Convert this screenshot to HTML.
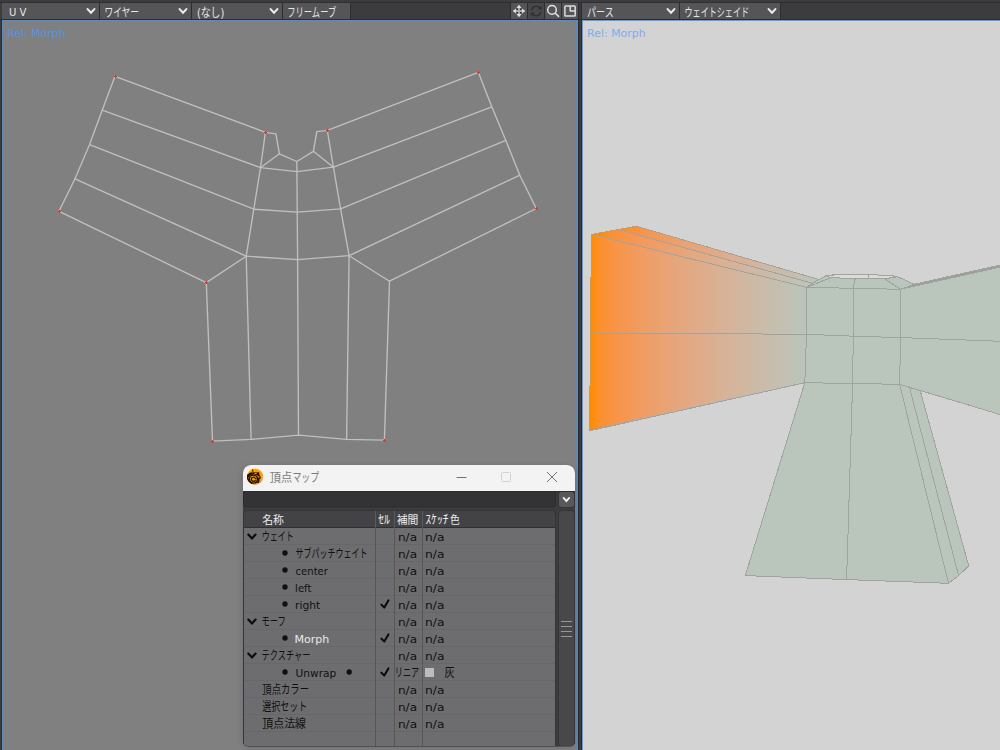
<!DOCTYPE html>
<html lang="ja">
<head>
<meta charset="utf-8">
<title>頂点マップ</title>
<style>
html,body{margin:0;padding:0;background:#3c3c3f;overflow:hidden;}
body{width:1000px;height:750px;font-family:"DejaVu Sans", "Liberation Sans", "Noto Sans CJK JP", sans-serif;}
svg{display:block;}
text{white-space:pre;}
</style>
</head>
<body>
<svg width="1000" height="750" viewBox="0 0 1000 750">
<defs><filter id="blur" x="-10%" y="-10%" width="120%" height="120%"><feGaussianBlur stdDeviation="3"/></filter></defs>
<rect x="0" y="0" width="1000" height="750" fill="#3c3c3f"/>
<rect x="0" y="2" width="1000" height="1" fill="#2f2f31"/>
<rect x="0" y="19" width="1000" height="1" fill="#2c2c2e"/>
<rect x="1" y="20" width="1" height="730" fill="#2d2d2f"/>
<rect x="578" y="3" width="1" height="747" fill="#2b2b2d"/>
<rect x="581" y="3" width="1" height="747" fill="#2b2b2d"/>
<rect x="2" y="20" width="576" height="730" fill="#4a90e2"/>
<rect x="3" y="21" width="574" height="729" fill="#808080"/>
<rect x="582" y="20" width="418" height="730" fill="#5c9cec"/>
<rect x="583" y="21" width="417" height="729" fill="#d3d3d3"/>
<rect x="2" y="3" width="97" height="16" fill="#555558"/>
<rect x="99" y="3" width="1" height="16" fill="#2d2d2f"/>
<text transform="translate(9.00 16.00) scale(0.921 1)" font-family="'DejaVu Sans', 'Liberation Sans', 'Noto Sans CJK JP', sans-serif" font-size="11" fill="#e6e6e6">U V</text>
<path d="M87.60 9.10 L91.00 12.70 L94.40 9.10" fill="none" stroke="#ececec" stroke-width="2.1" stroke-linecap="round" stroke-linejoin="miter"/>
<rect x="100" y="3" width="91" height="16" fill="#555558"/>
<rect x="191" y="3" width="1" height="16" fill="#2d2d2f"/>
<text transform="translate(104.48 16.60) scale(0.724 1)" font-family="'DejaVu Sans', 'Liberation Sans', 'Noto Sans CJK JP', sans-serif" font-size="12" fill="#e6e6e6">ワイヤー</text>
<path d="M179.60 9.10 L183.00 12.70 L186.40 9.10" fill="none" stroke="#ececec" stroke-width="2.1" stroke-linecap="round" stroke-linejoin="miter"/>
<rect x="192" y="3" width="90" height="16" fill="#555558"/>
<rect x="282" y="3" width="1" height="16" fill="#2d2d2f"/>
<text transform="translate(196.88 16.60) scale(0.821 1)" font-family="'DejaVu Sans', 'Liberation Sans', 'Noto Sans CJK JP', sans-serif" font-size="12" fill="#e6e6e6">(なし)</text>
<path d="M270.60 9.10 L274.00 12.70 L277.40 9.10" fill="none" stroke="#ececec" stroke-width="2.1" stroke-linecap="round" stroke-linejoin="miter"/>
<rect x="283" y="3" width="67" height="16" fill="#555558"/>
<rect x="350" y="3" width="1" height="16" fill="#2d2d2f"/>
<text transform="translate(287.31 16.60) scale(0.690 1)" font-family="'DejaVu Sans', 'Liberation Sans', 'Noto Sans CJK JP', sans-serif" font-size="12" fill="#e6e6e6">フリームーブ</text>
<rect x="582" y="3" width="97" height="16" fill="#555558"/>
<rect x="679" y="3" width="1" height="16" fill="#2d2d2f"/>
<text transform="translate(587.00 16.60) scale(0.757 1)" font-family="'DejaVu Sans', 'Liberation Sans', 'Noto Sans CJK JP', sans-serif" font-size="12" fill="#e6e6e6">パース</text>
<path d="M667.60 9.10 L671.00 12.70 L674.40 9.10" fill="none" stroke="#ececec" stroke-width="2.1" stroke-linecap="round" stroke-linejoin="miter"/>
<rect x="680" y="3" width="100" height="16" fill="#555558"/>
<rect x="780" y="3" width="1" height="16" fill="#2d2d2f"/>
<text transform="translate(684.53 16.60) scale(0.672 1)" font-family="'DejaVu Sans', 'Liberation Sans', 'Noto Sans CJK JP', sans-serif" font-size="12" fill="#e6e6e6">ウェイトシェイド</text>
<path d="M768.60 9.10 L772.00 12.70 L775.40 9.10" fill="none" stroke="#ececec" stroke-width="2.1" stroke-linecap="round" stroke-linejoin="miter"/>
<rect x="510" y="3" width="69" height="16" fill="#2d2d2f"/>
<rect x="511" y="3" width="16" height="16" fill="#555558"/>
<rect x="528" y="3" width="16" height="16" fill="#48484b"/>
<rect x="545" y="3" width="16" height="16" fill="#555558"/>
<rect x="562" y="3" width="16" height="16" fill="#555558"/>
<g fill="#dedede">
<rect x="517.0" y="9.0" width="4" height="4" fill="#39393b"/>
<rect x="518.1" y="6.5" width="1.8" height="9" fill="#b2b2b2"/>
<rect x="514.5" y="10.1" width="9" height="1.8" fill="#b2b2b2"/>
<path d="M519.0 4.7 l2.6 3.2 h-5.2z M519.0 17.3 l2.6 -3.2 h-5.2z M512.7 11.0 l3.2 2.6 v-5.2z M525.3 11.0 l-3.2 2.6 v-5.2z"/>
</g>
<g fill="none" stroke="#2f2f32" stroke-width="1.3">
<path d="M531.6 10.4 A4.6 4.6 0 0 1 539.8000000000001 8.0"/>
<path d="M540.8000000000001 11.6 A4.6 4.6 0 0 1 532.6 14.0"/>
</g>
<path d="M541.6 5.4 v4.0 h-4.0z M530.8000000000001 16.6 v-4.0 h4.0z" fill="#2f2f32"/>
<g fill="none" stroke="#e2e2e2" stroke-width="1.5" stroke-linecap="round">
<circle cx="552.0" cy="9.9" r="4.3"/>
<path d="M555.3 13.2 L558.6 16.4"/>
</g>
<g fill="none" stroke="#dcdcdc" stroke-width="1.5" stroke-linejoin="round">
<rect x="564.9" y="5.9" width="10.3" height="10.1" rx="0.8"/>
<path d="M570.2 5.9 V10.9 H575.2"/>
</g>
<text transform="translate(7.11 36.90) scale(0.995 1)" font-family="'DejaVu Sans', 'Liberation Sans', 'Noto Sans CJK JP', sans-serif" font-size="11" fill="#5093e8">Rel: Morph</text>
<text transform="translate(587.11 36.90) scale(0.995 1)" font-family="'DejaVu Sans', 'Liberation Sans', 'Noto Sans CJK JP', sans-serif" font-size="11" fill="#7eacef">Rel: Morph</text>
<g fill="none" stroke="#bfbfbf" stroke-width="1.35" stroke-linecap="round" stroke-linejoin="round">
<polyline points="115.0,76.3 265.4,132.3"/>
<polyline points="102.2,110.2 260.5,167.7"/>
<polyline points="89.6,144.6 253.8,209.2"/>
<polyline points="75.0,178.8 246.2,256.2"/>
<polyline points="59.0,211.3 206.3,282.6"/>
<polyline points="115.0,76.3 102.2,110.2 89.6,144.6 75.0,178.8 59.0,211.3"/>
<polyline points="265.4,132.3 260.5,167.7 253.8,209.2 246.2,256.2"/>
<polyline points="478.4,72.4 327.3,130.4"/>
<polyline points="491.8,106.8 333.4,167.2"/>
<polyline points="505.8,140.4 340.6,208.8"/>
<polyline points="519.8,175.2 349.1,255.7"/>
<polyline points="536.3,208.5 389.5,281.2"/>
<polyline points="478.4,72.4 491.8,106.8 505.8,140.4 519.8,175.2 536.3,208.5"/>
<polyline points="327.3,130.4 333.4,167.2 340.6,208.8 349.1,255.7"/>
<polyline points="265.4,132.3 275.9,133.8 279.4,153.8 296.8,161.5 313.4,151.3 316.8,131.7 327.3,130.4"/>
<polyline points="260.5,167.7 279.4,153.8"/>
<polyline points="333.4,167.2 313.4,151.3"/>
<polyline points="296.8,161.5 296.9,171.7 297.2,212.1 297.6,259.6 298.5,435.2"/>
<polyline points="260.5,167.7 296.9,171.7 333.4,167.2"/>
<polyline points="253.8,209.2 297.2,212.1 340.6,208.8"/>
<polyline points="246.2,256.2 297.6,259.6 349.1,255.7"/>
<polyline points="246.2,256.2 206.3,282.6 212.5,441.1"/>
<polyline points="246.2,256.2 251.1,439.4"/>
<polyline points="349.1,255.7 346.6,439.4"/>
<polyline points="349.1,255.7 389.5,281.2 384.4,440.2"/>
<polyline points="212.5,441.1 251.1,439.4 298.5,435.2 346.6,439.4 384.4,440.2"/>
</g>
<g fill="#ff2222" shape-rendering="crispEdges">
<path d="M114 76 h3 v1 h-3z M115 75 h1 v3 h-1z" />
<path d="M58 211 h3 v1 h-3z M59 210 h1 v3 h-1z" />
<path d="M264 132 h3 v1 h-3z M265 131 h1 v3 h-1z" />
<path d="M326 130 h3 v1 h-3z M327 129 h1 v3 h-1z" />
<path d="M477 72 h3 v1 h-3z M478 71 h1 v3 h-1z" />
<path d="M535 208 h3 v1 h-3z M536 207 h1 v3 h-1z" />
<path d="M205 282 h3 v1 h-3z M206 281 h1 v3 h-1z" />
<path d="M211 441 h3 v1 h-3z M212 440 h1 v3 h-1z" />
<path d="M383 440 h3 v1 h-3z M384 439 h1 v3 h-1z" />
</g>
<defs><linearGradient id="wg" gradientUnits="userSpaceOnUse" x1="591" y1="0" x2="806" y2="0"><stop offset="0.0000" stop-color="#ff8c00"/><stop offset="0.0417" stop-color="#fd8f2c"/><stop offset="0.0833" stop-color="#fa923c"/><stop offset="0.1250" stop-color="#f89549"/><stop offset="0.1667" stop-color="#f59753"/><stop offset="0.2083" stop-color="#f39a5c"/><stop offset="0.2500" stop-color="#f09d64"/><stop offset="0.2917" stop-color="#ed9f6b"/><stop offset="0.3333" stop-color="#eba271"/><stop offset="0.3750" stop-color="#e8a478"/><stop offset="0.4167" stop-color="#e5a77e"/><stop offset="0.4583" stop-color="#e3a983"/><stop offset="0.5000" stop-color="#e0ab88"/><stop offset="0.5417" stop-color="#ddae8e"/><stop offset="0.5833" stop-color="#dab092"/><stop offset="0.6250" stop-color="#d7b297"/><stop offset="0.6667" stop-color="#d4b49c"/><stop offset="0.7083" stop-color="#d1b7a0"/><stop offset="0.7500" stop-color="#ceb9a4"/><stop offset="0.7917" stop-color="#cbbba8"/><stop offset="0.8333" stop-color="#c8bdac"/><stop offset="0.8750" stop-color="#c4bfb0"/><stop offset="0.9167" stop-color="#c1c1b4"/><stop offset="0.9583" stop-color="#bdc3b7"/><stop offset="1.0000" stop-color="#bac5bb"/></linearGradient><linearGradient id="wg2" gradientUnits="userSpaceOnUse" x1="600" y1="0" x2="814" y2="0"><stop offset="0.0000" stop-color="#ff8c00"/><stop offset="0.0417" stop-color="#fd8f2c"/><stop offset="0.0833" stop-color="#fa923c"/><stop offset="0.1250" stop-color="#f89549"/><stop offset="0.1667" stop-color="#f59753"/><stop offset="0.2083" stop-color="#f39a5c"/><stop offset="0.2500" stop-color="#f09d64"/><stop offset="0.2917" stop-color="#ed9f6b"/><stop offset="0.3333" stop-color="#eba271"/><stop offset="0.3750" stop-color="#e8a478"/><stop offset="0.4167" stop-color="#e5a77e"/><stop offset="0.4583" stop-color="#e3a983"/><stop offset="0.5000" stop-color="#e0ab88"/><stop offset="0.5417" stop-color="#ddae8e"/><stop offset="0.5833" stop-color="#dab092"/><stop offset="0.6250" stop-color="#d7b297"/><stop offset="0.6667" stop-color="#d4b49c"/><stop offset="0.7083" stop-color="#d1b7a0"/><stop offset="0.7500" stop-color="#ceb9a4"/><stop offset="0.7917" stop-color="#cbbba8"/><stop offset="0.8333" stop-color="#c8bdac"/><stop offset="0.8750" stop-color="#c4bfb0"/><stop offset="0.9167" stop-color="#c1c1b4"/><stop offset="0.9583" stop-color="#bdc3b7"/><stop offset="1.0000" stop-color="#bac5bb"/></linearGradient><linearGradient id="wg3" gradientUnits="userSpaceOnUse" x1="618" y1="0" x2="822" y2="0"><stop offset="0.0000" stop-color="#ff8c00"/><stop offset="0.0417" stop-color="#fd8f2c"/><stop offset="0.0833" stop-color="#fa923c"/><stop offset="0.1250" stop-color="#f89549"/><stop offset="0.1667" stop-color="#f59753"/><stop offset="0.2083" stop-color="#f39a5c"/><stop offset="0.2500" stop-color="#f09d64"/><stop offset="0.2917" stop-color="#ed9f6b"/><stop offset="0.3333" stop-color="#eba271"/><stop offset="0.3750" stop-color="#e8a478"/><stop offset="0.4167" stop-color="#e5a77e"/><stop offset="0.4583" stop-color="#e3a983"/><stop offset="0.5000" stop-color="#e0ab88"/><stop offset="0.5417" stop-color="#ddae8e"/><stop offset="0.5833" stop-color="#dab092"/><stop offset="0.6250" stop-color="#d7b297"/><stop offset="0.6667" stop-color="#d4b49c"/><stop offset="0.7083" stop-color="#d1b7a0"/><stop offset="0.7500" stop-color="#ceb9a4"/><stop offset="0.7917" stop-color="#cbbba8"/><stop offset="0.8333" stop-color="#c8bdac"/><stop offset="0.8750" stop-color="#c4bfb0"/><stop offset="0.9167" stop-color="#c1c1b4"/><stop offset="0.9583" stop-color="#bdc3b7"/><stop offset="1.0000" stop-color="#bac5bb"/></linearGradient></defs>
<g shape-rendering="crispEdges" stroke-width="1" stroke-linejoin="round">
<polygon points="618.4,229.5 636.5,226.3 819.6,279.7 813.0,283.4" fill="url(#wg3)" stroke="#a0a3a0"/>
<polygon points="591.4,234.4 618.4,229.5 813.0,283.4 806.6,287.3" fill="url(#wg2)" stroke="#a0a3a0"/>
<polygon points="591.4,234.4 806.6,287.3 806.5,334.3 804.8,382.7 589.6,430.8 590.5,333.2" fill="url(#wg)" stroke="#a0a3a0"/>
<polyline points="590.5,333.2 700.0,333.6 806.5,334.3" fill="none" stroke="#a0a3a0"/>
<polygon points="806.6,287.3 817.4,280.2 826.0,275.8 837.0,274.4 868.5,274.6 891.6,275.6 898.6,277.1 914.1,284.3 900.6,289.3 853.2,288.3" fill="#bac5bb" stroke="#a0a3a0"/>
<polygon points="827.0,276.4 837.0,274.4 868.5,274.6 891.6,275.6 897.0,276.8 884.6,278.8 855.2,278.5 831.0,277.7" fill="#dadcda" stroke="#a0a3a0"/>
<polyline points="868.5,274.6 868.5,278.6" fill="none" stroke="#a0a3a0"/>
<polyline points="855.2,278.5 853.2,288.3" fill="none" stroke="#a0a3a0"/>
<polyline points="884.6,278.8 900.6,289.3" fill="none" stroke="#a0a3a0"/>
<polyline points="831.0,277.7 806.6,287.3" fill="none" stroke="#a0a3a0"/>
<polygon points="900.6,289.3 914.1,284.3 1001.0,264.8 1001.0,267.0" fill="#9c9e9c" stroke="#a0a3a0"/>
<polygon points="900.6,289.3 1001.0,267.0 1001.0,414.8 899.6,384.3" fill="#bac5bb" stroke="#a0a3a0"/>
<polyline points="900.6,337.6 1001.0,341.3" fill="none" stroke="#a0a3a0"/>
<polygon points="909.5,387.4 920.2,390.6 968.7,565.8 958.6,575.6" fill="#bac5bb" stroke="#a0a3a0"/>
<polygon points="899.6,384.3 909.5,387.4 958.6,575.6 948.5,583.3" fill="#bac5bb" stroke="#a0a3a0"/>
<polygon points="804.8,382.7 899.6,384.3 948.5,583.3 846.6,579.6 745.3,575.6" fill="#bac5bb" stroke="#a0a3a0"/>
<polyline points="852.6,383.5 846.6,579.6" fill="none" stroke="#a0a3a0"/>
<polygon points="806.6,287.3 853.2,288.3 900.6,289.3 900.6,337.6 899.6,384.3 852.6,383.5 804.8,382.7 806.5,334.3" fill="#bac5bb" stroke="#a0a3a0"/>
<polyline points="853.2,288.3 853.3,336.2 852.6,383.5" fill="none" stroke="#a0a3a0"/>
<polyline points="806.5,334.3 853.3,336.2 900.6,337.6" fill="none" stroke="#a0a3a0"/>
</g>
<rect x="242" y="466" width="334" height="282" rx="7" fill="#000" opacity="0.13" filter="url(#blur)"/>
<path d="M243 473 a8 8 0 0 1 8 -8 h316 a8 8 0 0 1 8 8 V741.5 a5 5 0 0 1 -5 5 H248 a5 5 0 0 1 -5 -5 z" fill="#2e2e30"/>
<defs><clipPath id="wclip"><path d="M243 460 V741.5 a4.4 4.4 0 0 0 4.4 4.4 H570.6 a4.4 4.4 0 0 0 4.4 -4.4 V460 z"/></clipPath></defs>
<g clip-path="url(#wclip)">
<rect x="243" y="491" width="332" height="256" fill="#3c3c3f"/>
<path d="M243 473 a8 8 0 0 1 8 -8 h316 a8 8 0 0 1 8 8 V491 H243 z" fill="#f3f3f3"/>
<circle cx="255.1" cy="476.8" r="8.1" fill="#ffa000"/>
<g fill="#231300" stroke="none">
<path d="M247.9 474.3 L250.4 472.6 L259.2 472.2 L259.3 474.8 L257 475.2 L253.6 474.3 L250.6 475.3 L248.6 477.4 L247.4 476.6 Z"/>
<path d="M257.3 474.6 L259.3 474.6 L260.8 477.3 L260.4 478.7 L259.3 479.4 L259.6 481.5 L258.5 482.7 L257.2 482.4 L257.9 480 L257.6 477 Z"/>
</g>
<g fill="none" stroke="#231300" stroke-linecap="round">
<path d="M247.9 474.9 A7.4 7.4 0 0 0 251.6 483.2" stroke-width="1.4"/>
<circle cx="253.4" cy="479.1" r="4.0" stroke-width="1.45"/>
<path d="M255.3 480.4 A2.1 2.1 0 1 1 255.5 478.6" stroke-width="1.25"/>
<path d="M252.5 469.7 L252.9 471.5" stroke-width="0.9"/>
<path d="M255.4 482.6 L258.4 482.4" stroke-width="0.9"/>
</g>
<ellipse cx="255.7" cy="473.6" rx="1.3" ry="0.55" fill="#ffa000"/>
<circle cx="258.7" cy="476.9" r="0.8" fill="#ffa000"/>
<text transform="translate(269.80 481.90) scale(0.933 1)" font-family="'Liberation Sans', 'Noto Sans CJK JP', sans-serif" font-size="12" fill="#7c7c7c">頂点</text>
<text transform="translate(292.46 481.90) scale(0.743 1)" font-family="'Liberation Sans', 'Noto Sans CJK JP', sans-serif" font-size="12" fill="#7c7c7c">マップ</text>
<path d="M456.5 477.5 H466.5" stroke="#707070" stroke-width="1" fill="none"/>
<rect x="501.5" y="472.5" width="9" height="9" rx="1" fill="none" stroke="#d2d2d2" stroke-width="1"/>
<path d="M547 472 L557 482 M557 472 L547 482" stroke="#6e6e6e" stroke-width="0.95" fill="none"/>
<rect x="243.5" y="491.5" width="312" height="15.5" fill="#333336" rx="2.5" stroke="#2c2c2e" stroke-width="1"/>
<rect x="243" y="491" width="332" height="1" fill="#2e2e30"/>
<rect x="558.5" y="491.5" width="16" height="16" fill="#2e2e30" rx="3"/>
<rect x="559" y="492" width="15" height="15" fill="#58585b" rx="2.5"/>
<path d="M563.60 497.95 L566.40 501.05 L569.20 497.95" fill="none" stroke="#f0f0f0" stroke-width="1.9" stroke-linecap="round" stroke-linejoin="miter"/>
<path d="M243.5 514 a3.5 3.5 0 0 1 3.5 -3.5 h305 a3.5 3.5 0 0 1 3.5 3.5 V746 H243.5 z" fill="#2e2e30"/>
<path d="M244 514 a3 3 0 0 1 3 -3 h305 a3 3 0 0 1 3 3 V527 H244 z" fill="#434346"/>
<rect x="244" y="527" width="311" height="1" fill="#2f2f31"/>
<rect x="244" y="528" width="311" height="218" fill="#6d6d6f"/>
<rect x="244" y="544" width="311" height="1" fill="#676769"/>
<rect x="244" y="561" width="311" height="1" fill="#676769"/>
<rect x="244" y="578" width="311" height="1" fill="#676769"/>
<rect x="244" y="595" width="311" height="1" fill="#676769"/>
<rect x="244" y="612" width="311" height="1" fill="#676769"/>
<rect x="244" y="629" width="311" height="1" fill="#676769"/>
<rect x="244" y="646" width="311" height="1" fill="#676769"/>
<rect x="244" y="663" width="311" height="1" fill="#676769"/>
<rect x="244" y="680" width="311" height="1" fill="#676769"/>
<rect x="244" y="697" width="311" height="1" fill="#676769"/>
<rect x="244" y="714" width="311" height="1" fill="#676769"/>
<rect x="244" y="731" width="311" height="1" fill="#676769"/>
<rect x="375" y="511" width="1" height="235" fill="#565658"/>
<rect x="375" y="511" width="1" height="16" fill="#5a5a5c"/>
<rect x="394" y="511" width="1" height="235" fill="#565658"/>
<rect x="394" y="511" width="1" height="16" fill="#5a5a5c"/>
<rect x="422" y="511" width="1" height="235" fill="#565658"/>
<rect x="422" y="511" width="1" height="16" fill="#5a5a5c"/>
<rect x="558.5" y="510.5" width="16" height="236" fill="#2e2e30" rx="3.5"/>
<rect x="559" y="511" width="15" height="235" fill="#48484b" rx="3"/>
<rect x="561" y="621" width="11" height="1" fill="#98989a"/>
<rect x="561" y="626" width="11" height="1" fill="#98989a"/>
<rect x="561" y="631" width="11" height="1" fill="#98989a"/>
<rect x="561" y="636" width="11" height="1" fill="#98989a"/>
<text transform="translate(262.20 524.40) scale(0.945 1)" font-family="'DejaVu Sans', 'Liberation Sans', 'Noto Sans CJK JP', sans-serif" font-size="11.5" fill="#ececec">名称</text>
<text transform="translate(378.20 524.40) scale(0.967 1)" font-family="'DejaVu Sans', 'Liberation Sans', 'Noto Sans CJK JP', sans-serif" font-size="12" fill="#ececec">ｾﾙ</text>
<text transform="translate(396.80 524.40) scale(0.942 1)" font-family="'DejaVu Sans', 'Liberation Sans', 'Noto Sans CJK JP', sans-serif" font-size="11.5" fill="#ececec">補間</text>
<text transform="translate(425.20 524.40) scale(0.983 1)" font-family="'DejaVu Sans', 'Liberation Sans', 'Noto Sans CJK JP', sans-serif" font-size="12" fill="#ececec">ｽｹｯﾁ</text>
<text transform="translate(450.00 524.40) scale(0.845 1)" font-family="'DejaVu Sans', 'Liberation Sans', 'Noto Sans CJK JP', sans-serif" font-size="11.5" fill="#ececec">色</text>
<path d="M248.35 534.55 L251.95 538.45 L255.55 534.55" fill="none" stroke="#0c0c0c" stroke-width="2.2" stroke-linecap="round" stroke-linejoin="miter"/>
<text transform="translate(261.63 541.30) scale(0.670 1)" font-family="'DejaVu Sans', 'Liberation Sans', 'Noto Sans CJK JP', sans-serif" font-size="12" fill="#101010">ウェイト</text>
<text transform="translate(397.90 540.70) scale(1.103 1)" font-family="'DejaVu Sans', 'Liberation Sans', 'Noto Sans CJK JP', sans-serif" font-size="11" fill="#101010">n/a</text>
<text transform="translate(425.08 540.70) scale(1.116 1)" font-family="'DejaVu Sans', 'Liberation Sans', 'Noto Sans CJK JP', sans-serif" font-size="11" fill="#101010">n/a</text>
<circle cx="285" cy="553.0" r="2.7" fill="#101010"/>
<text transform="translate(295.50 558.30) scale(0.667 1)" font-family="'DejaVu Sans', 'Liberation Sans', 'Noto Sans CJK JP', sans-serif" font-size="12" fill="#101010">サブパッチウェイト</text>
<text transform="translate(397.90 557.70) scale(1.103 1)" font-family="'DejaVu Sans', 'Liberation Sans', 'Noto Sans CJK JP', sans-serif" font-size="11" fill="#101010">n/a</text>
<text transform="translate(425.08 557.70) scale(1.116 1)" font-family="'DejaVu Sans', 'Liberation Sans', 'Noto Sans CJK JP', sans-serif" font-size="11" fill="#101010">n/a</text>
<circle cx="285" cy="570.0" r="2.7" fill="#101010"/>
<text transform="translate(295.50 574.70) scale(0.917 1)" font-family="'DejaVu Sans', 'Liberation Sans', 'Noto Sans CJK JP', sans-serif" font-size="11" fill="#101010">center</text>
<text transform="translate(397.90 574.70) scale(1.103 1)" font-family="'DejaVu Sans', 'Liberation Sans', 'Noto Sans CJK JP', sans-serif" font-size="11" fill="#101010">n/a</text>
<text transform="translate(425.08 574.70) scale(1.116 1)" font-family="'DejaVu Sans', 'Liberation Sans', 'Noto Sans CJK JP', sans-serif" font-size="11" fill="#101010">n/a</text>
<circle cx="285" cy="587.0" r="2.7" fill="#101010"/>
<text transform="translate(295.09 591.70) scale(0.914 1)" font-family="'DejaVu Sans', 'Liberation Sans', 'Noto Sans CJK JP', sans-serif" font-size="11" fill="#101010">left</text>
<text transform="translate(397.90 591.70) scale(1.103 1)" font-family="'DejaVu Sans', 'Liberation Sans', 'Noto Sans CJK JP', sans-serif" font-size="11" fill="#101010">n/a</text>
<text transform="translate(425.08 591.70) scale(1.116 1)" font-family="'DejaVu Sans', 'Liberation Sans', 'Noto Sans CJK JP', sans-serif" font-size="11" fill="#101010">n/a</text>
<circle cx="285" cy="604.0" r="2.7" fill="#101010"/>
<text transform="translate(295.02 608.70) scale(0.979 1)" font-family="'DejaVu Sans', 'Liberation Sans', 'Noto Sans CJK JP', sans-serif" font-size="11" fill="#101010">right</text>
<path d="M381.3 604.6 L384.3 607.5 L388.4 600.4" fill="none" stroke="#080808" stroke-width="2" stroke-linecap="round" stroke-linejoin="round"/>
<text transform="translate(397.90 608.70) scale(1.103 1)" font-family="'DejaVu Sans', 'Liberation Sans', 'Noto Sans CJK JP', sans-serif" font-size="11" fill="#101010">n/a</text>
<text transform="translate(425.08 608.70) scale(1.116 1)" font-family="'DejaVu Sans', 'Liberation Sans', 'Noto Sans CJK JP', sans-serif" font-size="11" fill="#101010">n/a</text>
<path d="M248.35 619.55 L251.95 623.45 L255.55 619.55" fill="none" stroke="#0c0c0c" stroke-width="2.2" stroke-linecap="round" stroke-linejoin="miter"/>
<text transform="translate(261.61 626.30) scale(0.688 1)" font-family="'DejaVu Sans', 'Liberation Sans', 'Noto Sans CJK JP', sans-serif" font-size="12" fill="#101010">モーフ</text>
<text transform="translate(397.90 625.70) scale(1.103 1)" font-family="'DejaVu Sans', 'Liberation Sans', 'Noto Sans CJK JP', sans-serif" font-size="11" fill="#101010">n/a</text>
<text transform="translate(425.08 625.70) scale(1.116 1)" font-family="'DejaVu Sans', 'Liberation Sans', 'Noto Sans CJK JP', sans-serif" font-size="11" fill="#101010">n/a</text>
<circle cx="285" cy="638.0" r="2.7" fill="#101010"/>
<text transform="translate(294.49 642.70) scale(1.005 1)" font-family="'DejaVu Sans', 'Liberation Sans', 'Noto Sans CJK JP', sans-serif" font-size="11" fill="#e8e8e8">Morph</text>
<path d="M381.3 638.6 L384.3 641.5 L388.4 634.4" fill="none" stroke="#080808" stroke-width="2" stroke-linecap="round" stroke-linejoin="round"/>
<text transform="translate(397.90 642.70) scale(1.103 1)" font-family="'DejaVu Sans', 'Liberation Sans', 'Noto Sans CJK JP', sans-serif" font-size="11" fill="#101010">n/a</text>
<text transform="translate(425.08 642.70) scale(1.116 1)" font-family="'DejaVu Sans', 'Liberation Sans', 'Noto Sans CJK JP', sans-serif" font-size="11" fill="#101010">n/a</text>
<path d="M248.35 653.55 L251.95 657.45 L255.55 653.55" fill="none" stroke="#0c0c0c" stroke-width="2.2" stroke-linecap="round" stroke-linejoin="miter"/>
<text transform="translate(261.62 660.30) scale(0.684 1)" font-family="'DejaVu Sans', 'Liberation Sans', 'Noto Sans CJK JP', sans-serif" font-size="12" fill="#101010">テクスチャー</text>
<text transform="translate(397.90 659.70) scale(1.103 1)" font-family="'DejaVu Sans', 'Liberation Sans', 'Noto Sans CJK JP', sans-serif" font-size="11" fill="#101010">n/a</text>
<text transform="translate(425.08 659.70) scale(1.116 1)" font-family="'DejaVu Sans', 'Liberation Sans', 'Noto Sans CJK JP', sans-serif" font-size="11" fill="#101010">n/a</text>
<circle cx="285" cy="672.0" r="2.7" fill="#101010"/>
<text transform="translate(295.50 676.70) scale(0.967 1)" font-family="'DejaVu Sans', 'Liberation Sans', 'Noto Sans CJK JP', sans-serif" font-size="11" fill="#101010">Unwrap</text>
<path d="M381.3 672.6 L384.3 675.5 L388.4 668.4" fill="none" stroke="#080808" stroke-width="2" stroke-linecap="round" stroke-linejoin="round"/>
<circle cx="349.2" cy="672.0" r="2.7" fill="#101010"/>
<text transform="translate(394.85 677.30) scale(0.676 1)" font-family="'DejaVu Sans', 'Liberation Sans', 'Noto Sans CJK JP', sans-serif" font-size="12" fill="#101010">リニア</text>
<rect x="425" y="668" width="9" height="9" fill="#bcbcbc"/>
<text transform="translate(444.40 677.30) scale(0.833 1)" font-family="'DejaVu Sans', 'Liberation Sans', 'Noto Sans CJK JP', sans-serif" font-size="12" fill="#101010">灰</text>
<text transform="translate(262.30 694.30) scale(0.778 1)" font-family="'DejaVu Sans', 'Liberation Sans', 'Noto Sans CJK JP', sans-serif" font-size="12" fill="#101010">頂点カラー</text>
<text transform="translate(397.90 693.70) scale(1.103 1)" font-family="'DejaVu Sans', 'Liberation Sans', 'Noto Sans CJK JP', sans-serif" font-size="11" fill="#101010">n/a</text>
<text transform="translate(425.08 693.70) scale(1.116 1)" font-family="'DejaVu Sans', 'Liberation Sans', 'Noto Sans CJK JP', sans-serif" font-size="11" fill="#101010">n/a</text>
<text transform="translate(262.30 711.30) scale(0.751 1)" font-family="'DejaVu Sans', 'Liberation Sans', 'Noto Sans CJK JP', sans-serif" font-size="12" fill="#101010">選択セット</text>
<text transform="translate(397.90 710.70) scale(1.103 1)" font-family="'DejaVu Sans', 'Liberation Sans', 'Noto Sans CJK JP', sans-serif" font-size="11" fill="#101010">n/a</text>
<text transform="translate(425.08 710.70) scale(1.116 1)" font-family="'DejaVu Sans', 'Liberation Sans', 'Noto Sans CJK JP', sans-serif" font-size="11" fill="#101010">n/a</text>
<text transform="translate(262.30 728.30) scale(0.912 1)" font-family="'DejaVu Sans', 'Liberation Sans', 'Noto Sans CJK JP', sans-serif" font-size="12" fill="#101010">頂点法線</text>
<text transform="translate(397.90 727.70) scale(1.103 1)" font-family="'DejaVu Sans', 'Liberation Sans', 'Noto Sans CJK JP', sans-serif" font-size="11" fill="#101010">n/a</text>
<text transform="translate(425.08 727.70) scale(1.116 1)" font-family="'DejaVu Sans', 'Liberation Sans', 'Noto Sans CJK JP', sans-serif" font-size="11" fill="#101010">n/a</text>
</g>
</svg>
</body>
</html>
